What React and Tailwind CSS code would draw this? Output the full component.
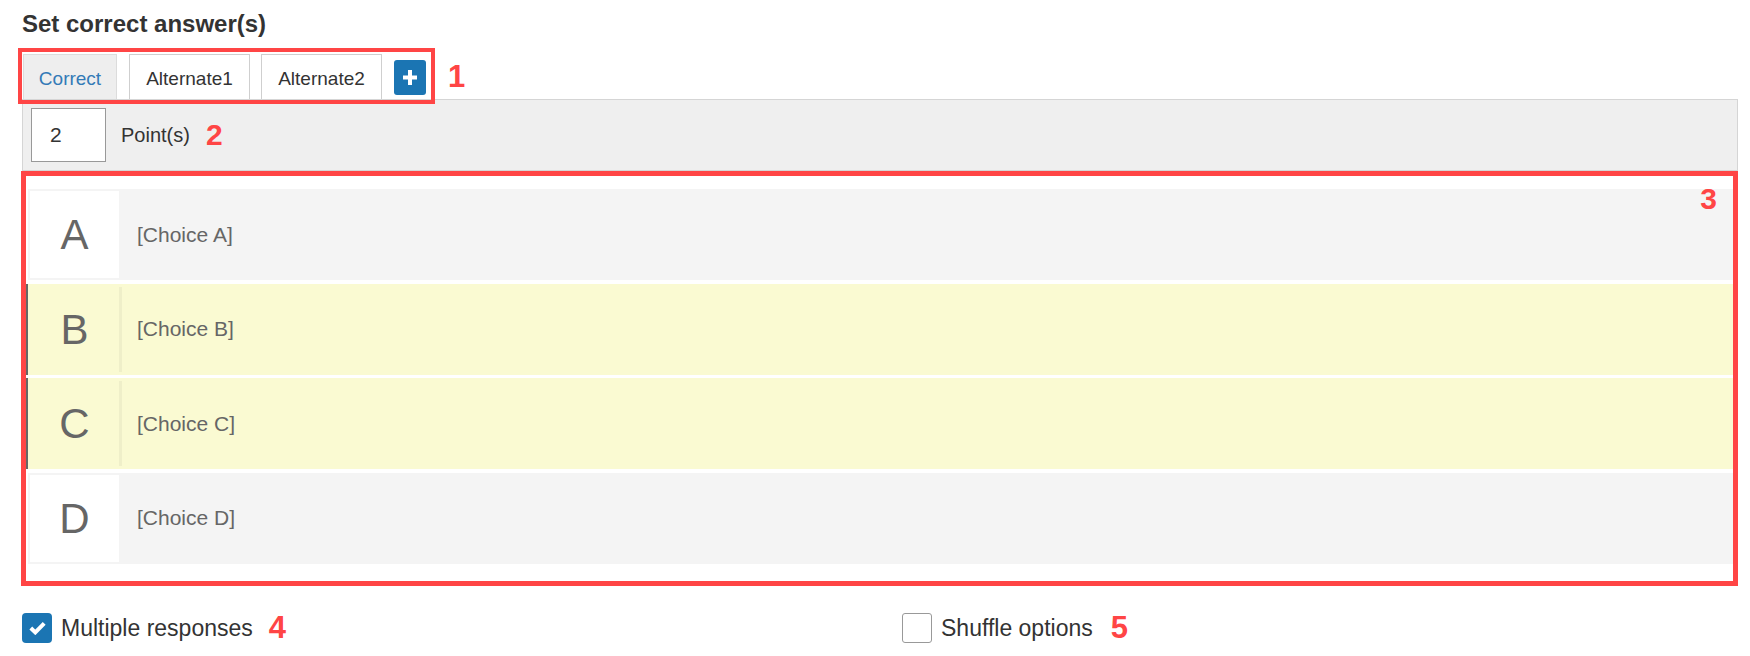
import React from "react";

const RED = "text-[#ff4545]";

function Plus() {
  return (
    <svg width="14" height="15" viewBox="0 0 14 15">
      <rect x="5" y="0" width="4" height="15" fill="#fff" />
      <rect x="0" y="5.5" width="14" height="4" fill="#fff" />
    </svg>
  );
}

function Check() {
  return (
    <svg width="17" height="14" viewBox="0 0 17 14">
      <path d="M1.8 7 L6.3 11.4 L15.2 2.4" fill="none" stroke="#fff" strokeWidth="4" strokeLinejoin="miter" />
    </svg>
  );
}

const choices = [
  { letter: "A", text: "[Choice A]", selected: false },
  { letter: "B", text: "[Choice B]", selected: true },
  { letter: "C", text: "[Choice C]", selected: true },
  { letter: "D", text: "[Choice D]", selected: false },
];

export default function App() {
  return (
    <div className="w-[1750px] h-[656px] bg-white text-[#333] font-['Liberation_Sans',Arial,sans-serif] overflow-hidden">
      <div className="pl-[22px] pr-[12px]">
        <h2 className="pt-[10px] text-[24px] leading-[28px] font-bold text-[#333]">
          Set correct answer(s)
        </h2>

        {/* Tabs */}
        <div className="relative mt-[16px] flex h-[45px] items-center">
          <div className="ml-px flex h-[45px] w-[94px] items-center justify-center border border-b-0 border-[#dcdcdc] bg-[#eeeeee] pt-[5px] text-[19px] text-[#337ab7]">
            Correct
          </div>
          <div className="ml-[12px] flex h-[45px] w-[121px] items-center justify-center border border-b-0 border-[#cfcfcf] bg-white pt-[5px] text-[19px] text-[#333]">
            Alternate1
          </div>
          <div className="ml-[11px] flex h-[45px] w-[121px] items-center justify-center border border-b-0 border-[#cfcfcf] bg-white pt-[5px] text-[19px] text-[#333]">
            Alternate2
          </div>
          <button className="ml-[12px] mt-[2px] flex h-[35px] w-[32px] items-center justify-center rounded-[3px] bg-[#1b75b3]">
            <Plus />
          </button>
          <span className={`ml-[22px] text-[31px] font-bold leading-none ${RED}`}>1</span>
          <div className="pointer-events-none absolute -left-[4px] -top-[6px] h-[56px] w-[417px] border-[4.5px] border-[#ff4545]" />
        </div>

        {/* Points panel */}
        <div className="flex h-[72px] items-center border border-[#d5d5d5] bg-[#efefef] pl-[8px]">
          <div className="flex h-[54px] w-[75px] items-center border border-[#999] bg-white pl-[18px] text-[21px] text-[#333]">
            2
          </div>
          <span className="ml-[15px] text-[20px] text-[#333]">Point(s)</span>
          <span className={`ml-[16px] text-[30px] font-bold leading-none ${RED}`}>2</span>
        </div>

        {/* Choices */}
        <div className="relative -ml-px border-[5px] border-[#ff4545] bg-white pt-[13px] pb-[17.5px]">
          <div className="flex flex-col gap-[3.5px]">
            {choices.map((c) => (
              <div
                key={c.letter}
                className={
                  c.selected
                    ? "flex h-[91px] border-l-2 border-[#666] bg-[#fafad2] py-[3px] pl-[2px]"
                    : "flex h-[91px] border-l-2 border-white bg-[#f4f4f4] py-[2px] pl-[2px]"
                }
              >
                <div
                  className={
                    c.selected
                      ? "flex w-[92px] items-center justify-center border-r-[3px] border-[#efefc9] text-[42px] text-[#666]"
                      : "flex w-[92px] items-center justify-center border-r-[3px] border-[#f4f4f4] bg-white text-[42px] text-[#666]"
                  }
                >
                  {c.letter}
                </div>
                <div className="flex items-center pl-[15px] text-[21px] text-[#666]">{c.text}</div>
              </div>
            ))}
          </div>
          <span className={`absolute right-[16px] top-[8px] text-[30px] font-bold leading-[30px] ${RED}`}>3</span>
        </div>

        {/* Options */}
        <div className="mt-[26px] grid grid-cols-2">
          <div className="flex items-center">
            <span className="flex h-[30px] w-[30px] items-center justify-center rounded-[4px] bg-[#1b75b3]">
              <Check />
            </span>
            <span className="ml-[9px] text-[23px] leading-[30px] text-[#333]">Multiple responses</span>
            <span className={`ml-[16px] text-[31px] font-bold leading-none ${RED}`}>4</span>
          </div>
          <div className="flex items-center pl-[22px]">
            <span className="h-[30px] w-[30px] rounded-[3px] border border-[#999] bg-white" />
            <span className="ml-[9px] text-[23px] leading-[30px] text-[#333]">Shuffle options</span>
            <span className={`ml-[18px] text-[31px] font-bold leading-none ${RED}`}>5</span>
          </div>
        </div>
      </div>
    </div>
  );
}
